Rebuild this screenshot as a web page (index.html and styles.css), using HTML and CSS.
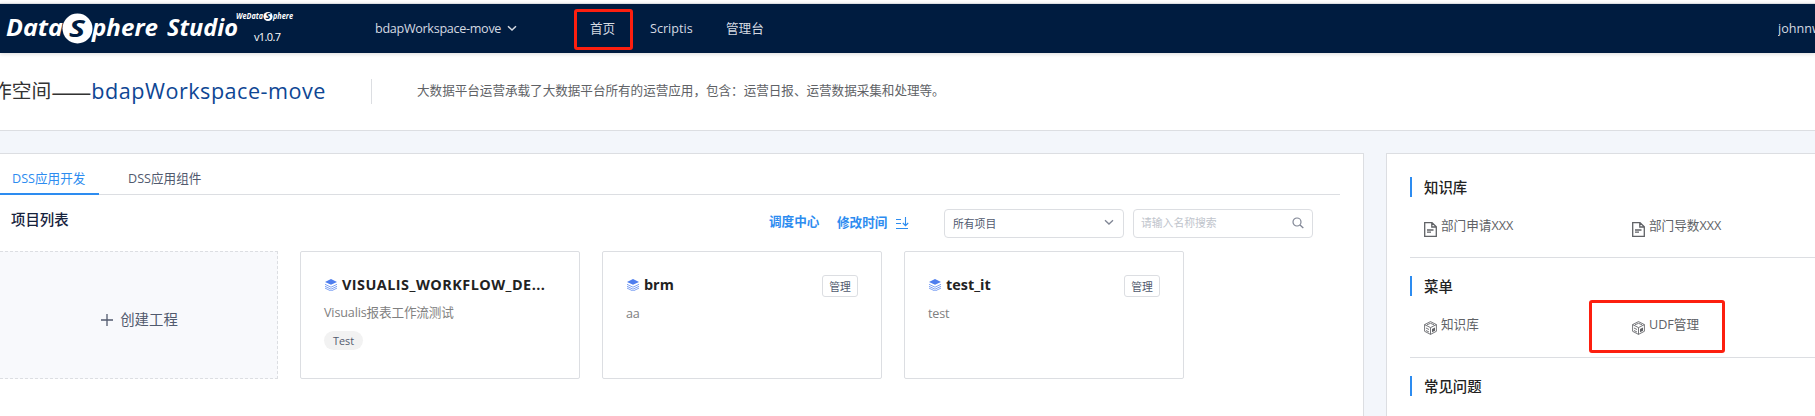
FILE: index.html
```html
<!DOCTYPE html>
<html lang="zh-CN">
<head>
<meta charset="utf-8">
<title>DataSphere Studio</title>
<link rel="stylesheet" href="styles.css">
</head>
<body>
<svg class="defs" width="0" height="0">
  <symbol id="layers" viewBox="0 0 12 12">
    <path d="M6 0 12 2.9 6 5.8 0 2.9Z" fill="#4f7eee"/>
    <path d="M0 5.3 6 8.2 12 5.3M0 7.3 6 10.2 12 7.3M0 9.1 6 12 12 9.1" fill="none" stroke="#5f8cf0" stroke-width=".8"/>
  </symbol>
  <symbol id="doc" viewBox="0 0 13 15">
    <path d="M.7.7H8L12.3 4.800V14.300H.7ZM7.800.7V5H12.300M3 8H9.500M3 10.200H7" fill="none" stroke="#606266" stroke-width="1.300"/>
  </symbol>
  <symbol id="cube" viewBox="0 0 13 14">
    <path d="M6.500.6 12.400 3.600V10.300L6.500 13.400.6 10.300V3.600ZM.6 3.600 6.500 6.600 12.400 3.600M6.500 6.600V13.400M3 3.800 6.500 2.300 10 3.800M2 7 5 8.500M2 9.500 5 11" fill="none" stroke="#66686c" stroke-width=".9"/>
    <path d="M8 8 11 6.400V9.800L8 11.300Z" fill="#606266"/>
  </symbol>
</svg>
<header class="header">
  <svg class="logo" width="300" height="49" viewBox="0 0 300 49">
    <g class="logo-main">
      <text x="6" y="32" textLength="57" lengthAdjust="spacingAndGlyphs">Data</text>
      <circle cx="77.500" cy="24.500" r="15" fill="#fff"/>
      <text class="logo-s" x="69" y="33" textLength="16" lengthAdjust="spacingAndGlyphs">S</text>
      <text x="92" y="32" textLength="66" lengthAdjust="spacingAndGlyphs">phere</text>
      <text x="167" y="32" textLength="71" lengthAdjust="spacingAndGlyphs">Studio</text>
    </g>
    <g class="logo-small">
      <text x="236" y="14.500" textLength="27" lengthAdjust="spacingAndGlyphs">WeData</text>
      <circle cx="268" cy="12.500" r="4.600" fill="#fff"/>
      <text class="logo-s" x="265.500" y="15.200" textLength="5" lengthAdjust="spacingAndGlyphs">S</text>
      <text x="273" y="14.500" textLength="20" lengthAdjust="spacingAndGlyphs">phere</text>
    </g>
    <text class="version" x="254" y="37" textLength="27">v1.0.7</text>
  </svg>
  <div class="workspace">bdapWorkspace-move
    <svg width="10" height="7" viewBox="0 0 10 7"><path d="M1 1.200 5 5 9 1.200" fill="none" stroke="#d5dae2" stroke-width="1.500"/></svg>
  </div>
  <nav class="nav">
    <a class="nav-home">首页</a>
    <a class="nav-scriptis">Scriptis</a>
    <a>管理台</a>
  </nav>
  <div class="user">johnnw</div>
</header>
<section class="intro">
  <h1 class="intro-title">作空间<span class="dash">——</span><span class="intro-name">bdapWorkspace-move</span></h1>
  <p class="intro-text">大数据平台运营承载了大数据平台所有的运营应用，包含：运营日报、运营数据采集和处理等。</p>
</section>
<main class="main">
  <section class="panel">
    <div class="tabs">
      <a class="tab tab-active">DSS应用开发</a>
      <a class="tab">DSS应用组件</a>
    </div>
    <div class="toolbar">
      <h2 class="toolbar-title">项目列表</h2>
      <a class="link">调度中心</a>
      <a class="link link-sort">修改时间
        <svg width="13" height="13" viewBox="0 0 13 13"><path d="M0 2.500H5M0 6.500H5M0 11.500H12M9.500 0V8.500M6.800 6 9.500 8.700 12.200 6" fill="none" stroke="#2d8cf0" stroke-width="1.100"/></svg>
      </a>
      <div class="field select">所有项目
        <svg width="10" height="7" viewBox="0 0 10 7"><path d="M1 1.200 5 5 9 1.200" fill="none" stroke="#808695" stroke-width="1.300"/></svg>
      </div>
      <div class="field search">请输入名称搜索
        <svg width="12" height="12" viewBox="0 0 12 12"><circle cx="5" cy="5" r="4" fill="none" stroke="#808695" stroke-width="1.200"/><path d="M8 8 11.300 11" stroke="#808695" stroke-width="1.300"/></svg>
      </div>
    </div>
    <div class="cards">
      <div class="create">
        <svg width="12" height="12" viewBox="0 0 12 12"><path d="M6 0V12M0 6H12" stroke="#515a6e" stroke-width="1.300"/></svg>
        创建工程
      </div>
      <article class="card">
        <div class="card-head"><svg width="12" height="12"><use href="#layers"/></svg><h3 class="wide">VISUALIS_WORKFLOW_DE...</h3></div>
        <p class="card-text">Visualis报表工作流测试</p>
        <span class="tag">Test</span>
      </article>
      <article class="card">
        <div class="card-head"><svg width="12" height="12"><use href="#layers"/></svg><h3>brm</h3><button class="manage">管理</button></div>
        <p class="card-text latin">aa</p>
      </article>
      <article class="card">
        <div class="card-head"><svg width="12" height="12"><use href="#layers"/></svg><h3>test_it</h3><button class="manage">管理</button></div>
        <p class="card-text latin">test</p>
      </article>
    </div>
  </section>
  <aside class="side">
    <section class="side-block">
      <h2>知识库</h2>
      <div class="side-items">
        <a class="item"><svg width="13" height="15"><use href="#doc"/></svg><span>部门申请XXX</span></a>
        <a class="item"><svg width="13" height="15"><use href="#doc"/></svg><span>部门导数XXX</span></a>
      </div>
    </section>
    <section class="side-block side-menu">
      <h2>菜单</h2>
      <div class="side-items">
        <a class="item"><svg width="13" height="14"><use href="#cube"/></svg><span>知识库</span></a>
        <a class="item marked"><svg width="13" height="14"><use href="#cube"/></svg><span>UDF管理</span></a>
      </div>
    </section>
    <section class="side-last"><h2>常见问题</h2></section>
  </aside>
</main>
</body>
</html>
```
FILE: styles.css
```css
*, *::after { box-sizing: border-box; }
body {
  margin: 0;
  padding-top: 3px;
  width: 1815px;
  height: 416px;
  overflow: hidden;
  background: #fff;
  font: 12.6px/20px "Open Sans", "Noto Sans CJK SC", sans-serif;
  color: #515a6e;
  white-space: nowrap;
}
h1, h2, h3, p { margin: 0; font-weight: 400; }
svg { display: block; flex: none; }
.defs { position: absolute; }

/* Top bar */
.header {
  display: flex;
  align-items: center;
  height: 50px;
  border-top: 1px solid #dcdee2;
  background: #001c40;
  color: #d5dae2;
  position: relative;
  box-shadow: 0 1px 4px rgba(0, 0, 0, .15);
}
.logo { width: 300px; }
.logo-main { font: italic 700 24px "Open Sans", sans-serif; fill: #fff; }
.logo-small { font: italic 700 8px "Open Sans", sans-serif; fill: #fff; }
.logo-main .logo-s, .logo-small .logo-s { fill: #001c40; }
.version { font: 11px "Open Sans", sans-serif; fill: #fff; }
.workspace {
  display: flex;
  align-items: center;
  justify-content: space-between;
  width: 142px;
  margin-left: 75px;
  letter-spacing: -.3px;
}
.nav { display: flex; align-items: center; margin-left: 57px; }
.nav-home {
  width: 59px;
  height: 41px;
  margin-right: 17px;
  padding-right: 2px;
  border: 3px solid #fd1f0f;
  border-radius: 3px;
  line-height: 33px;
  text-align: center;
  position: relative;
  top: 1px;
}
.nav-scriptis { width: 76px; }
.user { width: 37px; margin-left: auto; overflow: hidden; }

/* Workspace intro */
.intro {
  display: flex;
  align-items: center;
  height: 78px;
  border-bottom: 1px solid #dcdee2;
  overflow: hidden;
}
.intro-title {
  display: flex;
  align-items: center;
  width: 380px;
  margin: -1px 0 0 -8px;
  height: 25px;
  border-right: 1px solid #dcdee2;
  font-size: 19.8px;
  color: #333;
}
.dash { width: 40px; font: 24px/20px "Noto Sans CJK SC", sans-serif; }
.intro-name { font-size: 21.6px; letter-spacing: .5px; color: #0e4694; }
.intro-text { margin: -2px 0 0 45px; letter-spacing: -.03px; color: #606266; }

/* Body */
.main {
  display: flex;
  gap: 22px;
  height: 285px;
  padding-top: 22px;
  background: #f3f6fb;
}
.panel {
  flex: none;
  width: 1364px;
  border: solid #dcdee2;
  border-width: 1px 1px 0 0;
  background: #fff;
}
.tabs {
  display: flex;
  width: 1340px;
  height: 41px;
  border-bottom: 1px solid #dcdee2;
}
.tab { width: 128px; height: 41px; line-height: 49px; }
.tab-active {
  width: 99px;
  margin-right: 29px;
  padding-left: 12px;
  border-bottom: 2px solid #2d8cf0;
  color: #2d8cf0;
}
.toolbar { display: flex; height: 56px; padding: 14px 0 13px 11px; }
.toolbar-title { width: 758px; font-size: 14.4px; line-height: 21px; font-weight: 500; color: #17233d; }
.link { width: 68px; font-weight: 700; color: #2d8cf0; line-height: 25px; }
.link-sort { display: flex; justify-content: space-between; align-items: center; width: 72px; height: 26px; }
.link-sort svg { margin-top: 3px; }
.field {
  display: flex;
  align-items: center;
  justify-content: space-between;
  width: 180px;
  height: 29px;
  padding: 0 9px 0 8px;
  border: 1px solid #dcdee2;
  border-radius: 4px;
  font-size: 10.8px;
}
.select { margin-left: 35px; }
.select svg { margin-top: -3px; }
.search { margin-left: 9px; padding: 0 8px 2px 7px; color: #c0c4cc; }

/* Project cards */
.cards { display: flex; gap: 22px; }
.create {
  display: flex;
  align-items: center;
  justify-content: center;
  gap: 7px;
  width: 278px;
  height: 128px;
  border: 1px dashed #dcdee2;
  border-left: 0;
  background: #f8f9fc;
  padding: 9px 0 0 2px;
  font-size: 14.4px;
}
.card {
  width: 280px;
  height: 128px;
  padding: 22px 22px 0 23px;
  border: 1px solid #dcdee2;
  border-radius: 2px;
}
.card-head { display: flex; align-items: center; height: 22px; padding-left: 1px; }
.card h3 { margin-left: 5px; font-size: 14.4px; font-weight: 700; color: #222; }
.card .wide { letter-spacing: .48px; }
.manage {
  width: 36px;
  height: 22px;
  margin: 2px 1px 0 auto;
  padding: 0;
  border: 1px solid #dcdee2;
  border-radius: 3px;
  background: #fff;
  font: 10.8px/18px "Noto Sans CJK SC", sans-serif;
  color: #515a6e;
}
.card-text { margin-top: 7px; letter-spacing: -.15px; color: #808080; }
.latin { margin-top: 8px; }
.tag {
  display: block;
  width: 39px;
  height: 19px;
  margin-top: 8px;
  border-radius: 10px;
  background: #f2f2f2;
  font-size: 10.8px;
  line-height: 19px;
  text-align: center;
}

/* Sidebar */
.side {
  flex: 1;
  padding: 23px 0 0 23px;
  border: solid #dcdee2;
  border-width: 1px 0 0 1px;
  background: #fff;
}
.side-block { height: 81px; margin-bottom: 18px; border-bottom: 1px solid #dcdee2; }
.side-menu { height: 82px; }
.side h2 {
  height: 20px;
  padding-left: 12px;
  border-left: 2px solid #2d8cf0;
  font-size: 14.4px;
  line-height: 21px;
  font-weight: 500;
  color: #222;
}
.side-items { display: flex; margin-top: 19px; padding-left: 14px; }
.item { display: flex; gap: 4px; width: 208px; height: 21px; color: #606266; position: relative; }
.item svg { margin-top: 6px; }
.marked::after {
  content: "";
  position: absolute;
  left: -43px;
  top: -15px;
  width: 136px;
  height: 53px;
  border: 3px solid #fd1f0f;
  border-radius: 3px;
}
```
